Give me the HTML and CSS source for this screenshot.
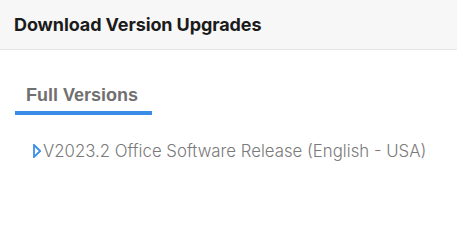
FILE: index.html
```html
<!DOCTYPE html>
<html>
<head>
<meta charset="utf-8">
<link rel="stylesheet" href="styles.css">
</head>
<body>
<div class="panel">
  <div class="header">
    <h1 class="title">Download Version Upgrades</h1>
  </div>
  <div class="content">
    <div class="tabs">
      <div class="tab active">Full Versions</div>
    </div>
    <ul class="list">
      <li class="item">
        <svg class="arrow" width="8" height="14" viewBox="0 0 8 14"><path d="M1 1 L7.2 7 L1 13 Z" fill="none" stroke="#3b8ee6" stroke-width="1.8" stroke-linejoin="miter"/></svg>
        <span class="label">V2023.2 Office Software Release (English - USA)</span>
      </li>
    </ul>
  </div>
</div>
</body>
</html>
```
FILE: styles.css
```css
html, body { margin: 0; padding: 0; background: #fff; }
.panel { width: 457px; }
.header {
  background: #f7f7f7;
  border-bottom: 1px solid #e6e6e6;
  height: 49px;
  display: flex;
  align-items: center;
  padding-left: 14px;
}
.title {
  margin: 0;
  font-family: Inter, "Noto Sans", sans-serif;
  font-weight: 700;
  font-size: 18px;
  color: #1b1b1b;
  letter-spacing: -0.1px;
}
.content { padding: 35px 0 0 15px; }
.tabs { display: flex; }
.tab {
  font-family: "Liberation Sans", Arial, sans-serif;
  font-weight: 700;
  font-size: 18px;
  color: #707070;
  padding: 0 11px 5px 11px;
  width: 115px;
  border-bottom: 4px solid #3a8de6;
}
.list { list-style: none; margin: 0; padding: 26px 0 0 18px; }
.item { display: flex; align-items: center; gap: 2px; }
.arrow { display: block; }
.label {
  font-family: Inter, "Noto Sans", sans-serif;
  font-weight: 300;
  font-size: 16.8px;
  color: #7a7a7a;
}
```
